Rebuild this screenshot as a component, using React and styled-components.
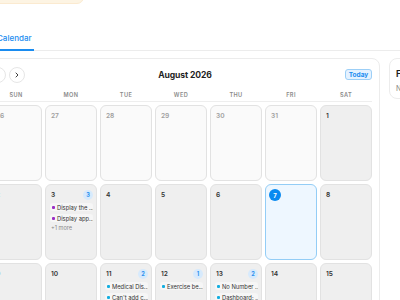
import React from "react";
import styled, { createGlobalStyle } from "styled-components";

const Global = createGlobalStyle`
  html, body { margin: 0; padding: 0; background: #ffffff; overflow: hidden; }
  body { font-family: Inter, "Noto Sans", Arial, sans-serif; color: #222; }
  * { box-sizing: border-box; }
`;

const Page = styled.div`
  width: 440px;
  margin-left: -18px;
  height: 300px;
  overflow: hidden;
`;

const Banner = styled.div`
  width: 102px;
  height: 14px;
  margin-top: -10px;
  background: #fdf4e3;
  border: 1px solid #fbead0;
  border-radius: 0 0 7px 0;
`;

const TabBar = styled.div`
  display: flex;
  margin-top: 29px;
  padding-left: 13px;
  border-bottom: 1px solid #ececec;
`;

const Tab = styled.div`
  font-size: 8px;
  font-weight: 500;
  color: ${(p) => (p.$active ? "#1a8cf0" : "#666")};
  padding: 0 2px 6px;
  border-bottom: 2px solid ${(p) => (p.$active ? "#1a8cf0" : "transparent")};
  margin-bottom: -1px;
  line-height: 10px;
`;

const Content = styled.div`
  display: flex;
  gap: 9px;
  margin-top: 7px;
  align-items: flex-start;
`;

const Card = styled.div`
  width: 398px;
  flex: none;
  background: #fff;
  border: 1px solid #ececec;
  border-radius: 8px;
  padding: 0 7px 8px 7px;
`;

const Header = styled.div`
  display: flex;
  align-items: center;
  justify-content: space-between;
  height: 31px;
`;

const NavGroup = styled.div`
  display: flex;
  gap: 3px;
`;

const NavButton = styled.div`
  width: 16px;
  height: 16px;
  border-radius: 50%;
  border: 1px solid #e6e6e6;
  background: #fff;
  display: flex;
  align-items: center;
  justify-content: center;
  color: #222;
`;

const Title = styled.div`
  font-size: 8.6px;
  font-weight: 700;
  color: #1f1f1f;
  letter-spacing: -0.1px;
`;

const TodayButton = styled.div`
  width: 27px;
  height: 11px;
  border-radius: 3px;
  background: #e5f2ff;
  border: 1px solid #9ccff7;
  color: #1a8cf0;
  font-size: 6.5px;
  font-weight: 700;
  display: flex;
  align-items: center;
  justify-content: center;
`;

const WeekHeader = styled.div`
  display: grid;
  grid-template-columns: repeat(7, 52px);
  column-gap: 3px;
  height: 12px;
  align-items: center;
  border-bottom: 1px solid #eeeeee;
  margin-bottom: 3px;
`;

const WeekDay = styled.div`
  text-align: center;
  font-size: 5.6px;
  font-weight: 600;
  letter-spacing: 0.4px;
  color: #8a8a8a;
  line-height: 8px;
  margin-top: -2px;
`;

const Grid = styled.div`
  display: grid;
  grid-template-columns: repeat(7, 52px);
  grid-auto-rows: 76px;
  gap: 3px;
`;

const Cell = styled.div`
  border-radius: 6px;
  border: 1px solid ${(p) => (p.$today ? "#93cdf6" : "#e2e2e2")};
  background: ${(p) => (p.$today ? "#eef7ff" : p.$other ? "#fafafa" : "#efefef")};
  padding: 4px 3px 0 4px;
  display: flex;
  flex-direction: column;
  gap: 3px;
  overflow: hidden;
`;

const CellTop = styled.div`
  display: flex;
  justify-content: space-between;
  align-items: center;
  height: 11px;
`;

const DayNum = styled.div`
  font-size: 6.6px;
  font-weight: 600;
  color: ${(p) => (p.$other ? "#a0a0a0" : "#333")};
  padding-left: 1px;
`;

const TodayMark = styled.div`
  width: 12px;
  height: 12px;
  border-radius: 50%;
  background: #0a8af0;
  color: #fff;
  font-size: 6px;
  font-weight: 700;
  display: flex;
  align-items: center;
  justify-content: center;
  margin-left: -1px;
  margin-top: 1px;
`;

const Badge = styled.div`
  width: 10px;
  height: 10px;
  border-radius: 50%;
  background: #d7eafc;
  color: #2a90ef;
  font-size: 5.6px;
  font-weight: 700;
  display: flex;
  align-items: center;
  justify-content: center;
`;

const Chip = styled.div`
  display: flex;
  align-items: center;
  gap: 2px;
  height: 8px;
  border-radius: 3px;
  background: #f6f6f6;
  padding: 0 2px;
  font-size: 5.8px;
  color: #333;
  white-space: nowrap;
  overflow: hidden;
`;

const Dot = styled.span`
  width: 3px;
  height: 3px;
  border-radius: 1px;
  flex: none;
  background: ${(p) => p.$color};
`;

const More = styled.div`
  font-size: 5.6px;
  color: #888;
  padding-left: 1px;
`;

const Side = styled.div`
  width: 120px;
  flex: none;
  height: 41px;
  border: 1px solid #ececec;
  border-radius: 8px;
  padding: 9px 6px;
`;

const SideTitle = styled.div`
  font-size: 8.6px;
  font-weight: 700;
  color: #1f1f1f;
  line-height: 12px;
`;

const SideText = styled.div`
  font-size: 7px;
  color: #888;
  margin-top: 4px;
`;

const PURPLE = "#9b2fc4";
const CYAN = "#14aee0";

const weeks = [
  [
    { d: 26, o: true }, { d: 27, o: true }, { d: 28, o: true }, { d: 29, o: true },
    { d: 30, o: true }, { d: 31, o: true }, { d: 1 },
  ],
  [
    { d: 2 },
    { d: 3, n: 3, ev: [["Display the ...", PURPLE], ["Display app...", PURPLE]], more: "+1 more" },
    { d: 4 }, { d: 5 }, { d: 6 }, { d: 7, t: true }, { d: 8 },
  ],
  [
    { d: 9 }, { d: 10 },
    { d: 11, n: 2, ev: [["Medical Dis...", CYAN], ["Can't add c...", CYAN]] },
    { d: 12, n: 1, ev: [["Exercise be...", CYAN]] },
    { d: 13, n: 2, ev: [["No Number ...", CYAN], ["Dashboard: ...", CYAN]] },
    { d: 14 }, { d: 15 },
  ],
];

const Chevron = ({ dir }) => (
  <svg width="8" height="8" viewBox="0 0 24 24" fill="none" stroke="currentColor" strokeWidth="2.6" strokeLinecap="round" strokeLinejoin="round">
    {dir === "left" ? <path d="M15 18l-6-6 6-6" /> : <path d="M9 18l6-6-6-6" />}
  </svg>
);

export default function App() {
  return (
    <>
      <Global />
      <Page>
        <Banner />
        <TabBar>
          <Tab $active>Calendar</Tab>
        </TabBar>
        <Content>
          <Card>
            <Header>
              <NavGroup>
                <NavButton><Chevron dir="left" /></NavButton>
                <NavButton><Chevron dir="right" /></NavButton>
              </NavGroup>
              <Title>August 2026</Title>
              <TodayButton>Today</TodayButton>
            </Header>
            <WeekHeader>
              {["SUN", "MON", "TUE", "WED", "THU", "FRI", "SAT"].map((w) => (
                <WeekDay key={w}>{w}</WeekDay>
              ))}
            </WeekHeader>
            <Grid>
              {weeks.flat().map((c, i) => (
                <Cell key={i} $other={c.o} $today={c.t}>
                  <CellTop>
                    {c.t ? <TodayMark>{c.d}</TodayMark> : <DayNum $other={c.o}>{c.d}</DayNum>}
                    {c.n ? <Badge>{c.n}</Badge> : null}
                  </CellTop>
                  {(c.ev || []).map(([text, color], j) => (
                    <Chip key={j}>
                      <Dot $color={color} />
                      {text}
                    </Chip>
                  ))}
                  {c.more ? <More>{c.more}</More> : null}
                </Cell>
              ))}
            </Grid>
          </Card>
          <Side>
            <SideTitle>Filters</SideTitle>
            <SideText>No filters</SideText>
          </Side>
        </Content>
      </Page>
    </>
  );
}
